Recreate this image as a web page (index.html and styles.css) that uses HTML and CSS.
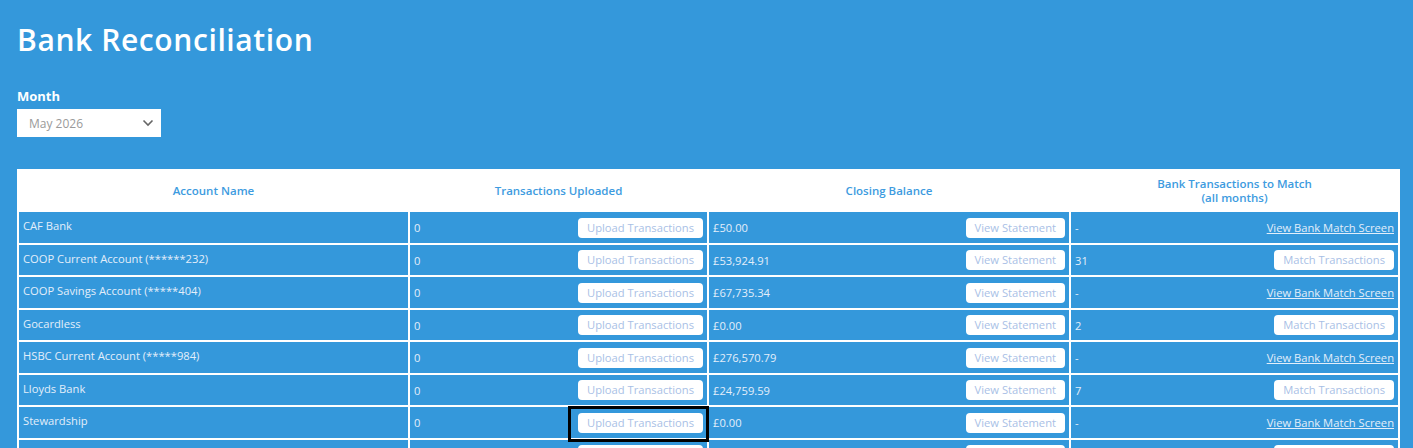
FILE: index.html
```html
<!DOCTYPE html>
<html lang="en">
<head>
  <meta charset="UTF-8">
  <title>Bank Reconciliation</title>
  <link rel="stylesheet" href="styles.css">
</head>
<body>

  <div class="page">
    <h1 class="title">Bank Reconciliation</h1>

    <div class="month-field">
      <label for="month">Month</label>
      <div class="select-box">
        <span class="select-value">May 2026</span>
        <svg class="chevron" width="12" height="8" viewBox="0 0 12 8"><path d="M1.5 1.5 L6 6 L10.5 1.5" fill="none" stroke="#666" stroke-width="1.6"/></svg>
      </div>
    </div>

    <table class="recon">
      <colgroup>
        <col style="width: 389px">
        <col style="width: 297px">
        <col style="width: 360px">
        <col style="width: 327px">
      </colgroup>
      <thead>
        <tr>
          <th>Account Name</th>
          <th>Transactions Uploaded</th>
          <th>Closing Balance</th>
          <th>Bank Transactions to Match<br>(all months)</th>
        </tr>
      </thead>
      <tbody>
        <tr>
          <td class="name">CAF Bank</td>
          <td><div class="cell"><span>0</span><button class="btn">Upload Transactions</button></div></td>
          <td><div class="cell"><span>£50.00</span><button class="btn">View Statement</button></div></td>
          <td><div class="cell"><span>-</span><a href="#" class="link">View Bank Match Screen</a></div></td>
        </tr>
        <tr>
          <td class="name">COOP Current Account (******232)</td>
          <td><div class="cell"><span>0</span><button class="btn">Upload Transactions</button></div></td>
          <td><div class="cell"><span>£53,924.91</span><button class="btn">View Statement</button></div></td>
          <td><div class="cell"><span>31</span><button class="btn">Match Transactions</button></div></td>
        </tr>
        <tr>
          <td class="name">COOP Savings Account (*****404)</td>
          <td><div class="cell"><span>0</span><button class="btn">Upload Transactions</button></div></td>
          <td><div class="cell"><span>£67,735.34</span><button class="btn">View Statement</button></div></td>
          <td><div class="cell"><span>-</span><a href="#" class="link">View Bank Match Screen</a></div></td>
        </tr>
        <tr>
          <td class="name">Gocardless</td>
          <td><div class="cell"><span>0</span><button class="btn">Upload Transactions</button></div></td>
          <td><div class="cell"><span>£0.00</span><button class="btn">View Statement</button></div></td>
          <td><div class="cell"><span>2</span><button class="btn">Match Transactions</button></div></td>
        </tr>
        <tr>
          <td class="name">HSBC Current Account (*****984)</td>
          <td><div class="cell"><span>0</span><button class="btn">Upload Transactions</button></div></td>
          <td><div class="cell"><span>£276,570.79</span><button class="btn">View Statement</button></div></td>
          <td><div class="cell"><span>-</span><a href="#" class="link">View Bank Match Screen</a></div></td>
        </tr>
        <tr>
          <td class="name">Lloyds Bank</td>
          <td><div class="cell"><span>0</span><button class="btn">Upload Transactions</button></div></td>
          <td><div class="cell"><span>£24,759.59</span><button class="btn">View Statement</button></div></td>
          <td><div class="cell"><span>7</span><button class="btn">Match Transactions</button></div></td>
        </tr>
        <tr>
          <td class="name">Stewardship</td>
          <td><div class="cell"><span>0</span><button class="btn focused">Upload Transactions</button></div></td>
          <td><div class="cell"><span>£0.00</span><button class="btn">View Statement</button></div></td>
          <td><div class="cell"><span>-</span><a href="#" class="link">View Bank Match Screen</a></div></td>
        </tr>
        <tr>
          <td class="name">Unity Trust Bank</td>
          <td><div class="cell"><span>0</span><button class="btn">Upload Transactions</button></div></td>
          <td><div class="cell"><span>£1,250.00</span><button class="btn">View Statement</button></div></td>
          <td><div class="cell"><span>4</span><button class="btn">Match Transactions</button></div></td>
        </tr>
      </tbody>
    </table>
  </div>

</body>
</html>
```

FILE: styles.css
```css
body {
  margin: 0;
  padding: 0;
  background: #3498db;
  font-family: 'Open Sans', sans-serif;
  color: white;
  overflow: hidden;
}
.page {
  padding: 0 13px 0 17px;
}
.title {
  margin: 0;
  padding-top: 19px;
  font-size: 30px;
  font-weight: 600;
  letter-spacing: 0.6px;
  line-height: 42px;
}
.month-field {
  margin-top: 26px;
}
.month-field label {
  display: block;
  font-size: 13px;
  font-weight: 700;
  line-height: 18px;
  margin-bottom: 4px;
}
.select-box {
  width: 144px;
  height: 28px;
  background: white;
  display: flex;
  align-items: center;
  justify-content: space-between;
  padding: 0 5px 0 12px;
  box-sizing: border-box;
}
.select-value {
  color: #9a9a9a;
  font-size: 12px;
}
.chevron {
  margin-right: 2px;
}
.recon {
  width: 1383px;
  table-layout: fixed;
  margin-top: 32px;
  background: white;
  border-spacing: 2px;
  font-size: 11.2px;
}
.recon th {
  height: 39px;
  padding: 0 4px;
  color: #3d9be0;
  font-weight: 600;
  font-size: 11.5px;
  line-height: 14px;
  text-align: center;
}
.recon td {
  background: #3498db;
  height: 30.5px;
  padding: 0 4px;
  color: #e3eefa;
  vertical-align: middle;
}
.cell {
  display: flex;
  align-items: center;
  justify-content: space-between;
  padding-top: 1px;
}
.recon td.name {
  vertical-align: top;
  padding-top: 5px;
  box-sizing: border-box;
  line-height: 17px;
}
.btn {
  position: relative;
  font-family: 'Open Sans', sans-serif;
  font-size: 11.2px;
  color: #a9bfe6;
  background: white;
  border: none;
  border-radius: 4px;
  height: 20px;
  padding: 0 9px;
  line-height: 20px;
  cursor: pointer;
}
.btn.focused::after {
  content: '';
  position: absolute;
  left: -10px;
  right: -6px;
  top: -7px;
  bottom: -9px;
  border: 3px solid #000;
}
.link {
  color: #e3eefa;
  font-size: 11.2px;
}
```
